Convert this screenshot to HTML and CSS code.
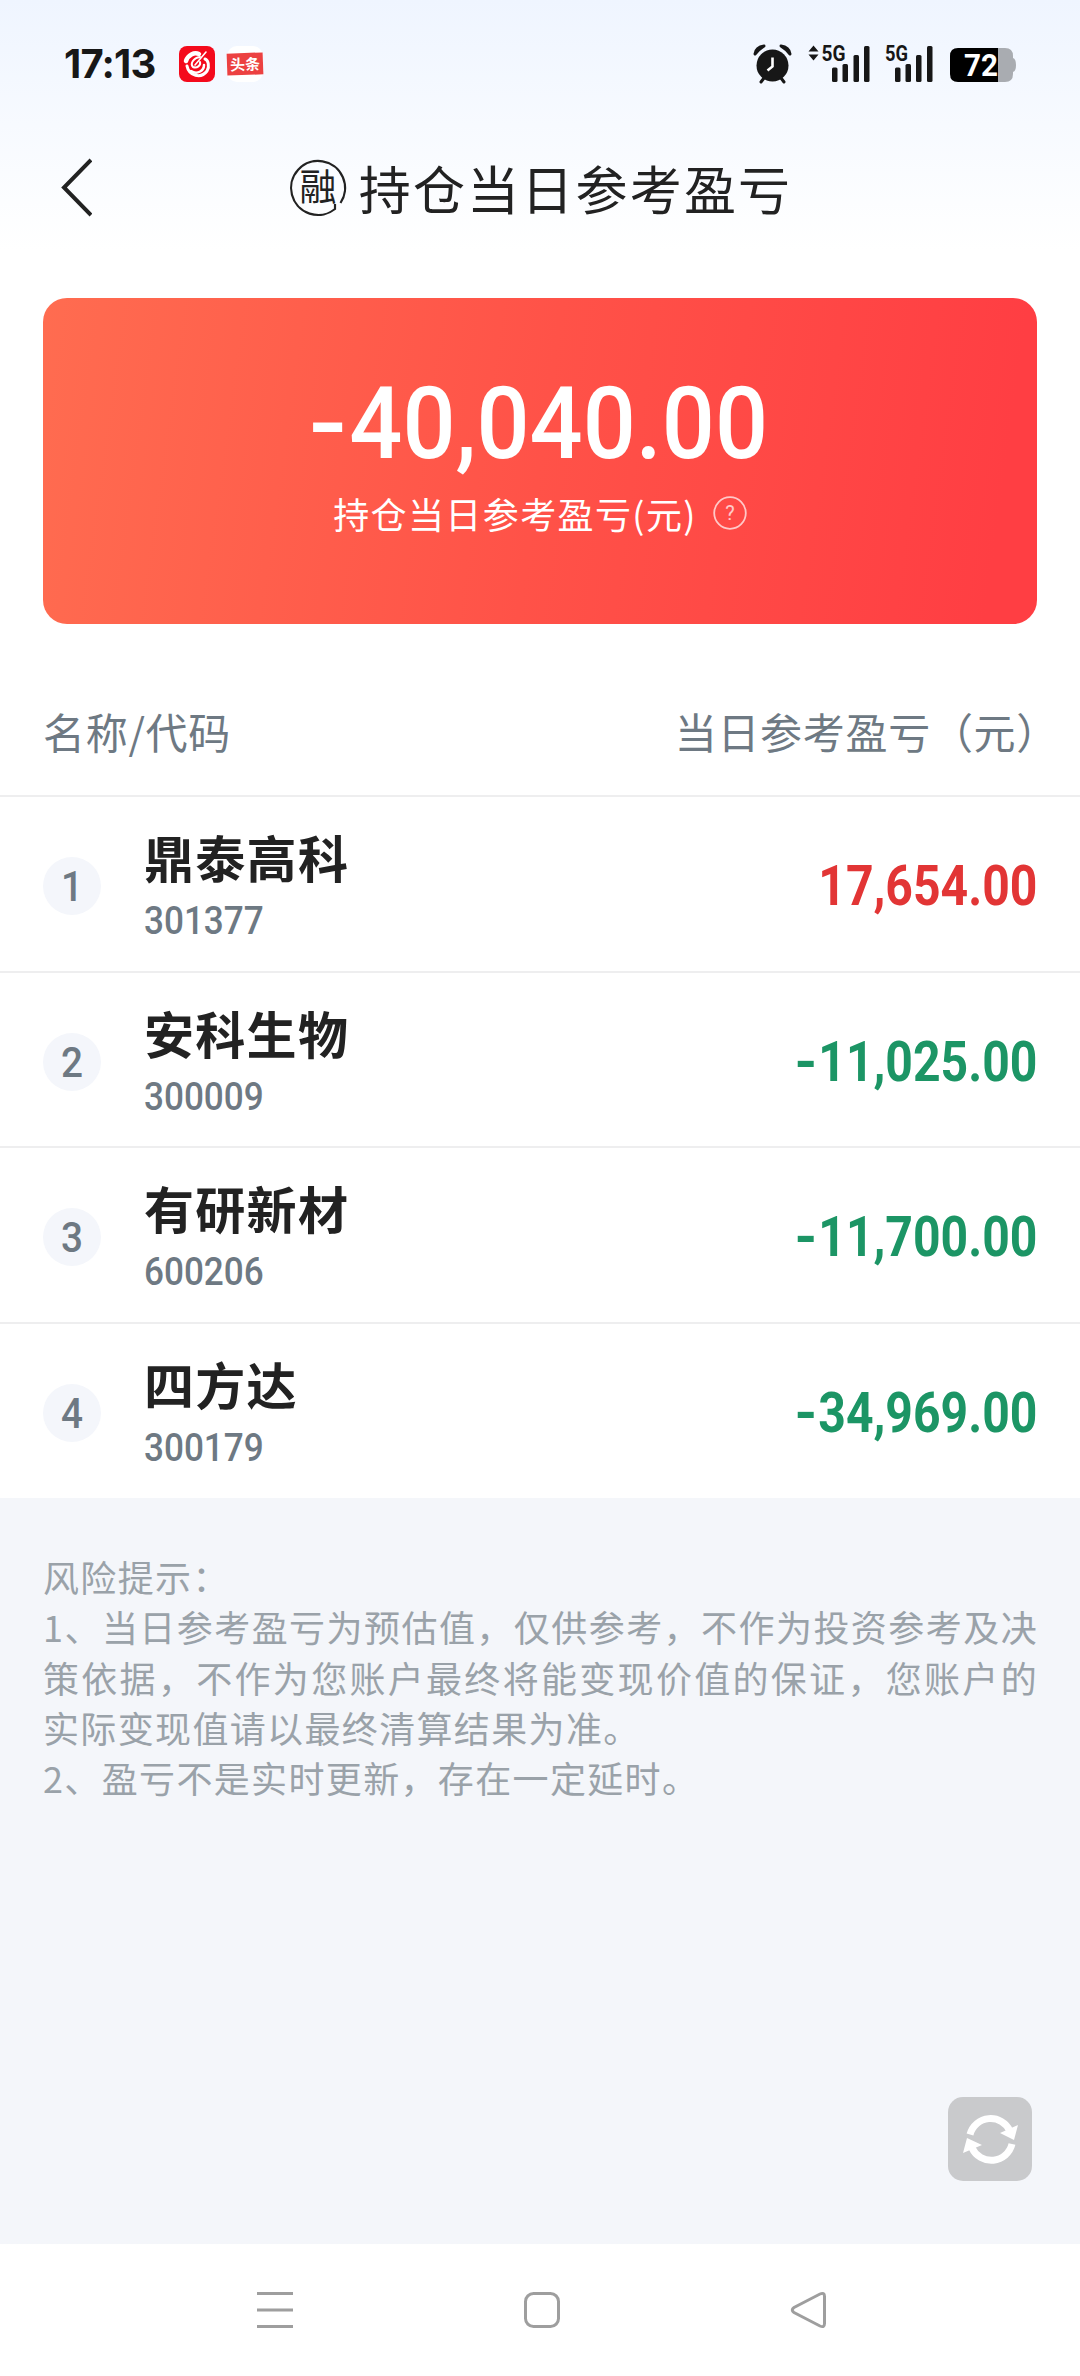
FILE: index.html
```html
<!DOCTYPE html>
<html lang="zh-CN">
<head>
    <meta charset="UTF-8">
    <meta name="viewport" content="width=device-width, initial-scale=1.0">
    <title>持仓当日参考盈亏</title>
    <link rel="stylesheet" href="styles.css">
</head>
<body>

<header class="top">
    <div class="status-bar">
        <div class="status-left">
            <span class="time">17:13</span>
            <svg class="app-icon" viewBox="0 0 36 36">
                <rect width="36" height="36" rx="8" fill="#f40a1c"/>
                <g fill="none" stroke="#fff" stroke-linecap="round">
                    <path d="M7 15C9 9 15 6 20 8" stroke-width="4.5"/>
                    <path d="M8 20C10 30 22 33 28 25C31 20 29 14 26 13" stroke-width="3"/>
                    <path d="M12 25C18 29 25 25 25 19" stroke-width="2.5"/>
                    <path d="M21 11C14 12 11 18 14 21C18 23 22 19 21 16" stroke-width="2"/>
                    <path d="M27 6L16 19" stroke-width="1.6"/>
                </g>
            </svg>
            <span class="news-icon"><span class="news-label">头条</span></span>
        </div>
        <svg class="status-icons" width="270" height="44" viewBox="750 42 270 44">
            <!-- alarm -->
            <g fill="#171717">
                <circle cx="772.5" cy="65.5" r="16"/>
                <path d="M755 54Q756 47 764 46Q759 49 755 54Z" stroke="#171717" stroke-width="3" stroke-linejoin="round"/>
                <path d="M790 54Q789 47 781 46Q786 49 790 54Z" stroke="#171717" stroke-width="3" stroke-linejoin="round"/>
                <path d="M764 78L761 82M781 78L784 82" stroke="#171717" stroke-width="3" stroke-linecap="round"/>
                <path d="M772.5 57.5V66.5L767.5 70.5" fill="none" stroke="#fff" stroke-width="2.6"/>
            </g>
            <!-- first sim -->
            <g fill="#171717">
                <path d="M808.5 51.5L813.5 45.5L818.5 51.5ZM808.5 54.5L813.5 60.5L818.5 54.5Z"/>
                <text class="net" x="821.5" y="61" textLength="24" lengthAdjust="spacingAndGlyphs">5G</text>
                <rect x="832" y="67.5" width="5.5" height="14.5" rx="1.5"/>
                <rect x="842.5" y="64" width="5.5" height="18" rx="1.5"/>
                <rect x="853.5" y="55" width="5.5" height="27" rx="1.5"/>
                <rect x="864" y="46" width="5.5" height="36" rx="1.5"/>
            </g>
            <!-- second sim -->
            <g fill="#171717">
                <text class="net" x="885" y="61" textLength="23" lengthAdjust="spacingAndGlyphs">5G</text>
                <rect x="895" y="67.5" width="5.5" height="14.5" rx="1.5"/>
                <rect x="905.5" y="64" width="5.5" height="18" rx="1.5"/>
                <rect x="916" y="55" width="5.5" height="27" rx="1.5"/>
                <rect x="927" y="46" width="5.5" height="36" rx="1.5"/>
            </g>
            <!-- battery -->
            <path d="M998 48H1005Q1013 48 1013 56V58Q1016 59 1016 65Q1016 71 1013 72V74Q1013 82 1005 82H998Z" fill="#a9acb1"/>
            <path d="M998 48H958Q950 48 950 56V74Q950 82 958 82H998Z" fill="#000"/>
            <text class="battery-level" x="964" y="76" textLength="34" lengthAdjust="spacingAndGlyphs">72</text>
        </svg>
    </div>

    <div class="title-bar">
        <svg class="back" width="34" height="60" viewBox="0 0 34 60" fill="none" stroke="#222" stroke-width="4">
            <path d="M33 2L6 29.5L33 57"/>
        </svg>
        <h1 class="title">
            <svg class="rong" width="58" height="58" viewBox="0 0 58 58">
                <path d="M51.500 44A27 27 0 1 0 46 50V45" fill="none" stroke="#222" stroke-width="2.2"/>
                <text x="29" y="42" text-anchor="middle">融</text>
            </svg>
            <span>持仓当日参考盈亏</span>
        </h1>
    </div>
</header>

<main>
    <section class="summary">
        <div class="total"><span class="num"><span class="sign">-</span>40,040.00</span></div>
        <div class="total-label">
            <span>持仓当日参考盈亏(元)</span>
            <svg width="34" height="34" viewBox="0 0 34 34">
                <circle cx="17" cy="17" r="15.8" fill="none" stroke="#fff" stroke-width="1.8"/>
                <text x="17" y="24" text-anchor="middle">?</text>
            </svg>
        </div>
    </section>

    <section class="holdings">
        <div class="list-head">
            <span>名称/代码</span>
            <span class="head-right">当日参考盈亏（元）</span>
        </div>
        <ul class="list">
            <li class="row">
                <span class="rank"><span class="num">1</span></span>
                <div class="stock">
                    <span class="name">鼎泰高科</span>
                    <span class="code num">301377</span>
                </div>
                <span class="amount num up">17,654.00</span>
            </li>
            <li class="row">
                <span class="rank"><span class="num">2</span></span>
                <div class="stock">
                    <span class="name">安科生物</span>
                    <span class="code num">300009</span>
                </div>
                <span class="amount num down"><span class="sign">-</span>11,025.00</span>
            </li>
            <li class="row">
                <span class="rank"><span class="num">3</span></span>
                <div class="stock">
                    <span class="name">有研新材</span>
                    <span class="code num">600206</span>
                </div>
                <span class="amount num down"><span class="sign">-</span>11,700.00</span>
            </li>
            <li class="row">
                <span class="rank"><span class="num">4</span></span>
                <div class="stock">
                    <span class="name">四方达</span>
                    <span class="code num">300179</span>
                </div>
                <span class="amount num down"><span class="sign">-</span>34,969.00</span>
            </li>
        </ul>
    </section>

    <section class="tips">
        <p>风险提示：</p>
        <p>1、当日参考盈亏为预估值，仅供参考，不作为投资参考及决策依据，不作为您账户最终将能变现价值的保证，您账户的实际变现值请以最终清算结果为准。</p>
        <p>2、盈亏不是实时更新，存在一定延时。</p>
    </section>
</main>

<button class="refresh" type="button" aria-label="刷新">
    <svg width="84" height="84" viewBox="0 0 84 84">
        <g fill="none" stroke="#fff" stroke-width="7">
            <path d="M22 37.5A21.3 21.3 0 0 1 62 34"/>
            <path d="M64 47A21.3 21.3 0 0 1 24 51"/>
        </g>
        <path d="M52 36L70 28L66 43ZM34 48L15 56L19 41Z" fill="#fff"/>
    </svg>
</button>

<nav class="system-nav">
    <svg width="38" height="38" viewBox="0 0 38 38">
        <path d="M1 2.5H37M1 19H37M1 35.5H37"/>
    </svg>
    <svg width="38" height="38" viewBox="0 0 38 38">
        <rect x="2.5" y="2.5" width="33" height="33" rx="8"/>
    </svg>
    <svg width="38" height="38" viewBox="0 0 38 38">
        <path d="M31 3Q35.5 1 35.5 5.5V32.5Q35.5 37 31 35L5 21.5Q1.5 19 5 16.5Z"/>
    </svg>
</nav>

</body>
</html>
```
FILE: styles.css
```css
* {
    box-sizing: border-box;
}

body {
    margin: 0;
    width: 1080px;
    height: 2376px;
    display: flex;
    flex-direction: column;
    position: relative;
    font-family: "Noto Sans CJK SC", sans-serif;
    color: #222;
    background-color: #fff;
}

main {
    flex: 1;
    display: flex;
    flex-direction: column;
}

/* Digits are a little condensed */
.num {
    display: inline-block;
    font-family: Roboto, sans-serif;
    font-weight: 500;
    transform: scaleX(0.9);
}

.sign {
    display: inline-block;
    margin-right: 0.06em;
    transform: scaleX(1.2);
}

/* Status bar and title */
.top {
    height: 298px;
    background: linear-gradient(#eff5ff, #fff 250px);
}

.status-bar {
    height: 128px;
    padding: 0 64px;
    display: flex;
    align-items: center;
    justify-content: space-between;
}

.status-left {
    display: flex;
    align-items: center;
    gap: 12px;
}

.time {
    width: 103px;
    font: 700 40px/44px Inter, sans-serif;
    letter-spacing: -0.8px;
    color: #171717;
}

.app-icon {
    width: 36px;
    height: 36px;
}

.news-icon {
    width: 36px;
    height: 36px;
    border-radius: 10px;
    background: #fff;
    display: flex;
    align-items: center;
}

.news-label {
    width: 36px;
    height: 22px;
    line-height: 21px;
    font-size: 15px;
    font-weight: 700;
    text-align: center;
    color: #fff;
    background: #ec4141;
    transform: rotate(-2deg);
}

.status-icons {
    margin-right: -4px;
}

.net {
    font: 700 22px Roboto, sans-serif;
}

.battery-level {
    font: 700 31px Roboto, sans-serif;
    fill: #fff;
}

.title-bar {
    height: 120px;
    display: flex;
    align-items: center;
    padding: 0 58px;
}

.title {
    flex: 1;
    margin: 0 33px 0 0;
    display: flex;
    align-items: center;
    justify-content: center;
    gap: 12px;
    font-size: 52px;
    font-weight: 400;
    line-height: 60px;
    letter-spacing: 2.2px;
}

.rong {
    overflow: visible;
}

.rong text {
    font-size: 37px;
    letter-spacing: 0;
    fill: #222;
}

/* Total card */
.summary {
    height: 326px;
    margin: 0 43px;
    padding-top: 61px;
    border-radius: 24px;
    color: #fff;
    text-align: center;
    background: linear-gradient(98deg, #ff6c50, #ff5248 50%, #ff3e43 95%);
}

.total {
    font-size: 100px;
    line-height: 112px;
}

.total .num {
    transform: scaleX(0.935);
}

.total-label {
    display: flex;
    align-items: center;
    justify-content: center;
    gap: 16px;
    margin-top: 8px;
    font-size: 36px;
    line-height: 50px;
    letter-spacing: 1.4px;
}

.total-label svg {
    opacity: 0.7;
}

.total-label text {
    font: 20px Roboto, sans-serif;
    letter-spacing: 0;
    fill: #fff;
}

/* Holdings list */
.list-head {
    height: 171px;
    padding: 42px 43px 0;
    display: flex;
    align-items: center;
    justify-content: space-between;
    font-size: 42px;
    letter-spacing: 0.7px;
    color: #6e7983;
}

.head-right {
    margin-right: -22px;
}

.list {
    list-style: none;
    margin: 0;
    padding: 0;
}

.row {
    height: 175.7px;
    padding: 4px 43px 0;
    border-top: 2px solid #eeeeef;
    display: flex;
    align-items: center;
}

.rank {
    width: 58px;
    height: 58px;
    border-radius: 50%;
    background: #f4f6fb;
    color: #6e7983;
    font-size: 43px;
    text-align: center;
}

.rank .num {
    display: block;
    line-height: 58px;
}

.stock {
    flex: 1;
    margin-left: 43px;
    display: flex;
    flex-direction: column;
    align-items: flex-start;
}

.name {
    margin-top: -6px;
    margin-bottom: 6px;
    font-size: 50px;
    font-weight: 700;
    line-height: 70px;
    letter-spacing: 1.3px;
}

.code {
    font-size: 39px;
    line-height: 48px;
    color: #6e7983;
    transform-origin: left;
}

.amount {
    font-size: 55px;
    font-weight: 700;
    transform: scaleX(0.875);
    transform-origin: right;
}

.up {
    color: #e23535;
}

.down {
    color: #1c9565;
}

/* Risk tips */
.tips {
    flex: 1;
    padding: 53px 42px 0 43px;
    font-size: 36px;
    line-height: 50.4px;
    letter-spacing: 1.35px;
    text-align: justify;
    color: #9aa2a9;
    background: #f4f6fa;
}

.tips p {
    margin: 0;
}

/* Floats over the tips area */
.refresh {
    position: absolute;
    right: 48px;
    bottom: 195px;
    width: 84px;
    height: 84px;
    padding: 0;
    border: none;
    border-radius: 15px;
    background: #c9cacc;
}

.system-nav {
    height: 132px;
    padding: 0 253px 0 256px;
    display: flex;
    align-items: center;
    justify-content: space-between;
}

.system-nav svg {
    fill: none;
    stroke: #9e9e9e;
    stroke-width: 3;
}
```
